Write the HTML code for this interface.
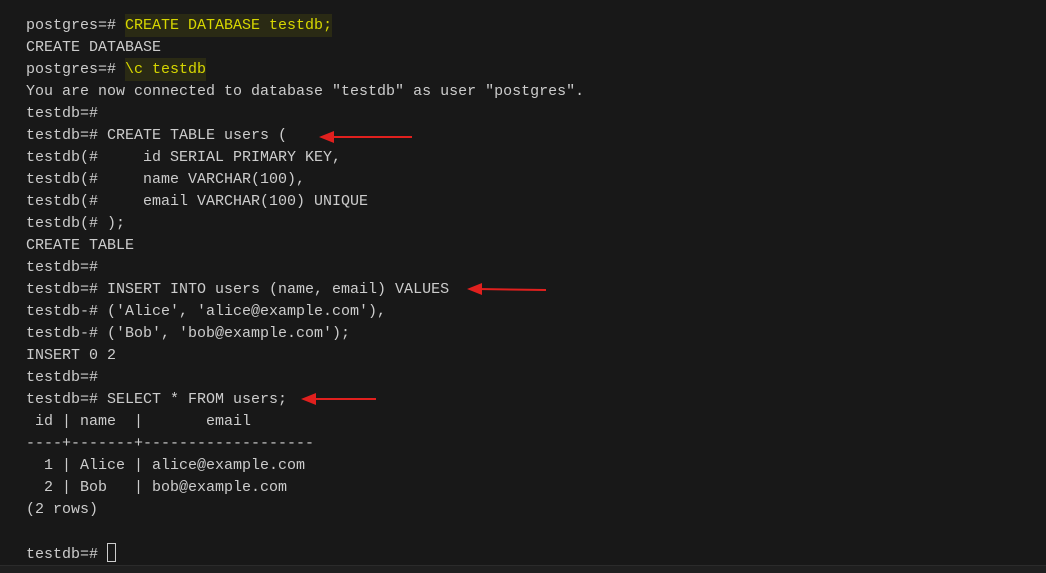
<!DOCTYPE html>
<html><head><style>
html,body{margin:0;padding:0;background:#181818;width:1046px;height:572px;overflow:hidden;}
pre{position:absolute;left:26px;top:15px;margin:0;font-family:"Liberation Mono",monospace;font-size:15px;line-height:22px;color:#cccccc;}
.h{background:#2a2a14;color:#d7d700;padding:3px 0;}
.cur{display:inline-block;width:9px;height:19px;border:1px solid #cccccc;vertical-align:-4px;box-sizing:border-box;}
.bot{position:absolute;left:0;top:565px;width:1046px;height:7px;background:#1f1f1f;border-top:1px solid #2b2b2b;}
svg{position:absolute;left:0;top:0;}
</style></head><body>
<pre>postgres=# <span class="h">CREATE DATABASE testdb;</span>
CREATE DATABASE
postgres=# <span class="h">\c testdb</span>
You are now connected to database "testdb" as user "postgres".
testdb=#
testdb=# CREATE TABLE users (
testdb(#     id SERIAL PRIMARY KEY,
testdb(#     name VARCHAR(100),
testdb(#     email VARCHAR(100) UNIQUE
testdb(# );
CREATE TABLE
testdb=#
testdb=# INSERT INTO users (name, email) VALUES
testdb-# ('Alice', 'alice@example.com'),
testdb-# ('Bob', 'bob@example.com');
INSERT 0 2
testdb=#
testdb=# SELECT * FROM users;
 id | name  |       email
----+-------+-------------------
  1 | Alice | alice@example.com
  2 | Bob   | bob@example.com
(2 rows)

testdb=# <span class="cur"></span></pre>
<svg width="1046" height="572">
<g fill="#e0201e" stroke="#e0201e">
<line x1="330" y1="137" x2="412" y2="137" stroke-width="2"/>
<polygon points="319,137 334,131 334,143" stroke="none"/>
<line x1="478" y1="289" x2="546" y2="290" stroke-width="2"/>
<polygon points="467,289 482,283 482,295" stroke="none"/>
<line x1="312" y1="399" x2="376" y2="399" stroke-width="2"/>
<polygon points="301,399 316,393 316,405" stroke="none"/>
</g>
</svg>
<div class="bot"></div>
</body></html>
